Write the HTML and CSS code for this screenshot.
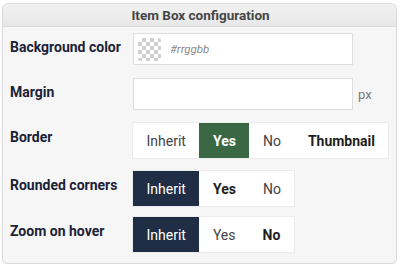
FILE: index.html
```html
<!DOCTYPE html>
<html>
<head>
<meta charset="utf-8">
<link rel="stylesheet" href="styles.css">
</head>
<body>
<div class="panel">
  <div class="panel-head">Item Box configuration</div>
  <div class="panel-body">
    <div class="row">
      <div class="label">Background color</div>
      <div class="field">
        <div class="input color-input">
          <span class="swatch"></span>
          <span class="placeholder">#rrggbb</span>
        </div>
      </div>
    </div>
    <div class="row">
      <div class="label">Margin</div>
      <div class="field">
        <div class="input"></div>
        <span class="unit">px</span>
      </div>
    </div>
    <div class="row">
      <div class="label">Border</div>
      <div class="field">
        <div class="group">
          <span class="opt">Inherit</span>
          <span class="opt sel-green">Yes</span>
          <span class="opt">No</span>
          <span class="opt bold">Thumbnail</span>
        </div>
      </div>
    </div>
    <div class="row">
      <div class="label">Rounded corners</div>
      <div class="field">
        <div class="group">
          <span class="opt sel-navy">Inherit</span>
          <span class="opt bold">Yes</span>
          <span class="opt">No</span>
        </div>
      </div>
    </div>
    <div class="row row-tight">
      <div class="label">Zoom on hover</div>
      <div class="field">
        <div class="group">
          <span class="opt sel-navy">Inherit</span>
          <span class="opt">Yes</span>
          <span class="opt bold">No</span>
        </div>
      </div>
    </div>
  </div>
</div>
</body>
</html>
```

FILE: styles.css
```css
html, body {
  margin: 0;
  padding: 0;
  background: #ffffff;
}
body {
  font-family: Roboto, "Liberation Sans", sans-serif;
  padding: 3px 3px 0 2px;
}
.panel {
  width: 393px;
  height: 259px;
  border: 1px solid #dcdcdc;
  border-radius: 6px;
  background: #f6f6f6;
  box-shadow: 0 1px 2px rgba(0,0,0,0.08);
  overflow: hidden;
}
.panel-head {
  height: 22px;
  line-height: 22px;
  text-align: center;
  font-size: 13.5px;
  font-weight: 700;
  color: #454545;
  background: linear-gradient(#f1f1f1, #e7e7e7);
  border-bottom: 1px solid #dadada;
  padding-left: 2px;
}
.panel-body {
  display: flex;
  flex-direction: column;
  gap: 13px;
  padding: 6px 0 0 7px;
}
.row {
  display: flex;
  align-items: flex-start;
}
.row-tight {
  margin-top: -2px;
}
.label {
  width: 123px;
  font-size: 14px;
  font-weight: 700;
  color: #1c2236;
  padding-top: 6px;
}
.field {
  display: flex;
  align-items: center;
}
.input {
  width: 218px;
  height: 30px;
  background: #fff;
  border: 1px solid #dedede;
}
.color-input {
  display: flex;
  align-items: center;
}
.swatch {
  width: 23px;
  height: 23px;
  margin-left: 4px;
  border-radius: 3px;
  background-color: #fff;
  background-image:
    linear-gradient(45deg, #c8c8c8 25%, transparent 25%, transparent 75%, #c8c8c8 75%),
    linear-gradient(45deg, #c8c8c8 25%, transparent 25%, transparent 75%, #c8c8c8 75%);
  background-size: 8px 8px;
  background-position: 0 0, 4px 4px;
  opacity: 0.85;
}
.placeholder {
  margin-left: 9px;
  font-size: 11.5px;
  font-style: italic;
  color: #8a8a8a;
}
.unit {
  margin-left: 5px;
  font-size: 13px;
  color: #7a7a7a;
}
.group {
  display: flex;
  height: 35px;
  background: #fff;
  box-shadow: 0 0 0 1px #ececec, 0 1px 1px rgba(0,0,0,0.06);
}
.opt {
  display: flex;
  align-items: center;
  padding: 0 13.5px;
  font-size: 14px;
  color: #444;
}
.opt.bold {
  font-weight: 700;
  color: #1e1e1e;
}
.sel-green {
  background: #3a6845;
  color: #fff;
  font-weight: 700;
}
.sel-navy {
  background: #1f2d45;
  color: #fff;
}
```
